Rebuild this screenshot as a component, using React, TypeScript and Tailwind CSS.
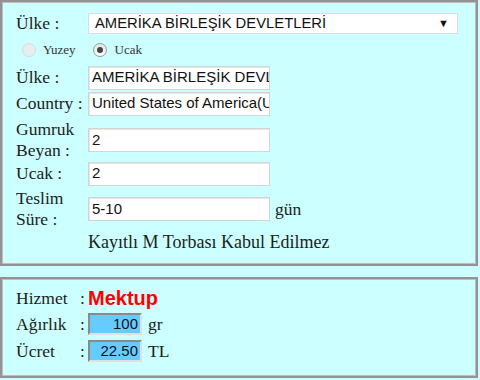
const serif = "font-['Liberation_Serif','Times_New_Roman',serif]";
const sans = "font-['Liberation_Sans',Arial,sans-serif]";

function TextBox({ value, w = "w-[182px]" }: { value: string; w?: string }) {
  return (
    <div
      className={`${w} h-[24px] bg-white border border-[#d4d4d4] shadow-[inset_1px_1px_0_#e6e6e6] flex items-center pl-[3px] overflow-hidden whitespace-nowrap ${sans} text-[15px] text-[#111]`}
    >
      {value}
    </div>
  );
}

function Radio({ checked, disabled }: { checked?: boolean; disabled?: boolean }) {
  return (
    <span
      className={`w-[14px] h-[14px] rounded-full border flex items-center justify-center ${
        disabled
          ? "border-[#d6dcdc] bg-[#e6eeee]"
          : "border-[#9a9a9a] bg-gradient-to-b from-[#e8e8e8] to-[#fafafa]"
      }`}
    >
      {checked && <span className="w-[6px] h-[6px] rounded-full bg-[#444]" />}
    </span>
  );
}

function Row({
  label,
  children,
  className = "",
}: {
  label: React.ReactNode;
  children?: React.ReactNode;
  className?: string;
}) {
  return (
    <div className={`flex items-center ${className}`}>
      <div className="w-[72px] leading-[21px]">{label}</div>
      {children}
    </div>
  );
}

export default function App() {
  return (
    <div className={`w-[480px] h-[380px] bg-[#ccffff] ${serif} text-[17.5px] text-[#1c1c1c]`}>
      <div className="w-[478px] h-[266px] border-2 border-[#939393] shadow-[inset_0_0_0_1px_#bdbdbd] pl-[14px] pt-[11px]">
        <Row label="Ülke :" className="h-[21px]">
          <div
            className={`w-[370px] h-[21px] bg-white border border-[#dcdcdc] flex items-center justify-between pl-[6px] pr-[8px] ${sans} text-[14.8px] text-[#111]`}
          >
            <span>AMERİKA BİRLEŞİK DEVLETLERİ</span>
            <span className="text-[11px]">▼</span>
          </div>
        </Row>

        <div className="mt-[8px] h-[16px] flex items-center text-[13px] pl-[6px]">
          <Radio disabled />
          <span className="ml-[7px] text-[#333]">Yuzey</span>
          <span className="ml-[17px]">
            <Radio checked />
          </span>
          <span className="ml-[8px] text-[#333]">Ucak</span>
        </div>

        <Row label="Ülke :" className="mt-[8px] h-[23px]">
          <TextBox value="AMERİKA BİRLEŞİK DEVLETLERİ" />
        </Row>
        <Row label="Country :" className="mt-[3px] h-[23px]">
          <TextBox value="United States of America(USA)" />
        </Row>
        <Row
          label={
            <>
              Gumruk
              <br />
              Beyan :
            </>
          }
          className="mt-[4px] h-[42px]"
        >
          <TextBox value="2" />
        </Row>
        <Row label="Ucak :" className="mt-[1px] h-[23px]">
          <TextBox value="2" />
        </Row>
        <Row
          label={
            <>
              Teslim
              <br />
              Süre :
            </>
          }
          className="mt-[3px] h-[42px]"
        >
          <TextBox value="5-10" />
          <span className="ml-[5px]">gün</span>
        </Row>
        <Row label="" className="mt-[2px] h-[21px]">
          <span className="text-[18px]">Kayıtlı M Torbası Kabul Edilmez</span>
        </Row>
      </div>

      <div className="mt-[11px] w-[478px] h-[101px] border-2 border-[#939393] shadow-[inset_0_0_0_1px_#bdbdbd] pl-[14px] pt-[8px]">
        <div className="flex items-center h-[22px]">
          <span className="w-[64px]">Hizmet</span>
          <span className="w-[8px]">:</span>
          <span className={`${sans} font-bold text-[20px] text-[#ff0000]`}>Mektup</span>
        </div>
        <div className="flex items-center h-[22px] mt-[4px]">
          <span className="w-[64px]">Ağırlık</span>
          <span className="w-[8px]">:</span>
          <div
            className={`w-[54px] h-[22px] bg-[#66ccff] border-2 border-t-[#8a8a8a] border-l-[#8a8a8a] border-b-[#e0e0e0] border-r-[#e0e0e0] flex items-center justify-end pr-[2px] ${sans} text-[15px] text-[#111]`}
          >
            100
          </div>
          <span className="ml-[6px]">gr</span>
        </div>
        <div className="flex items-center h-[22px] mt-[5px]">
          <span className="w-[64px]">Ücret</span>
          <span className="w-[8px]">:</span>
          <div
            className={`w-[54px] h-[22px] bg-[#66ccff] border-2 border-t-[#8a8a8a] border-l-[#8a8a8a] border-b-[#e0e0e0] border-r-[#e0e0e0] flex items-center justify-end pr-[2px] ${sans} text-[15px] text-[#111]`}
          >
            22.50
          </div>
          <span className="ml-[6px]">TL</span>
        </div>
      </div>
    </div>
  );
}
